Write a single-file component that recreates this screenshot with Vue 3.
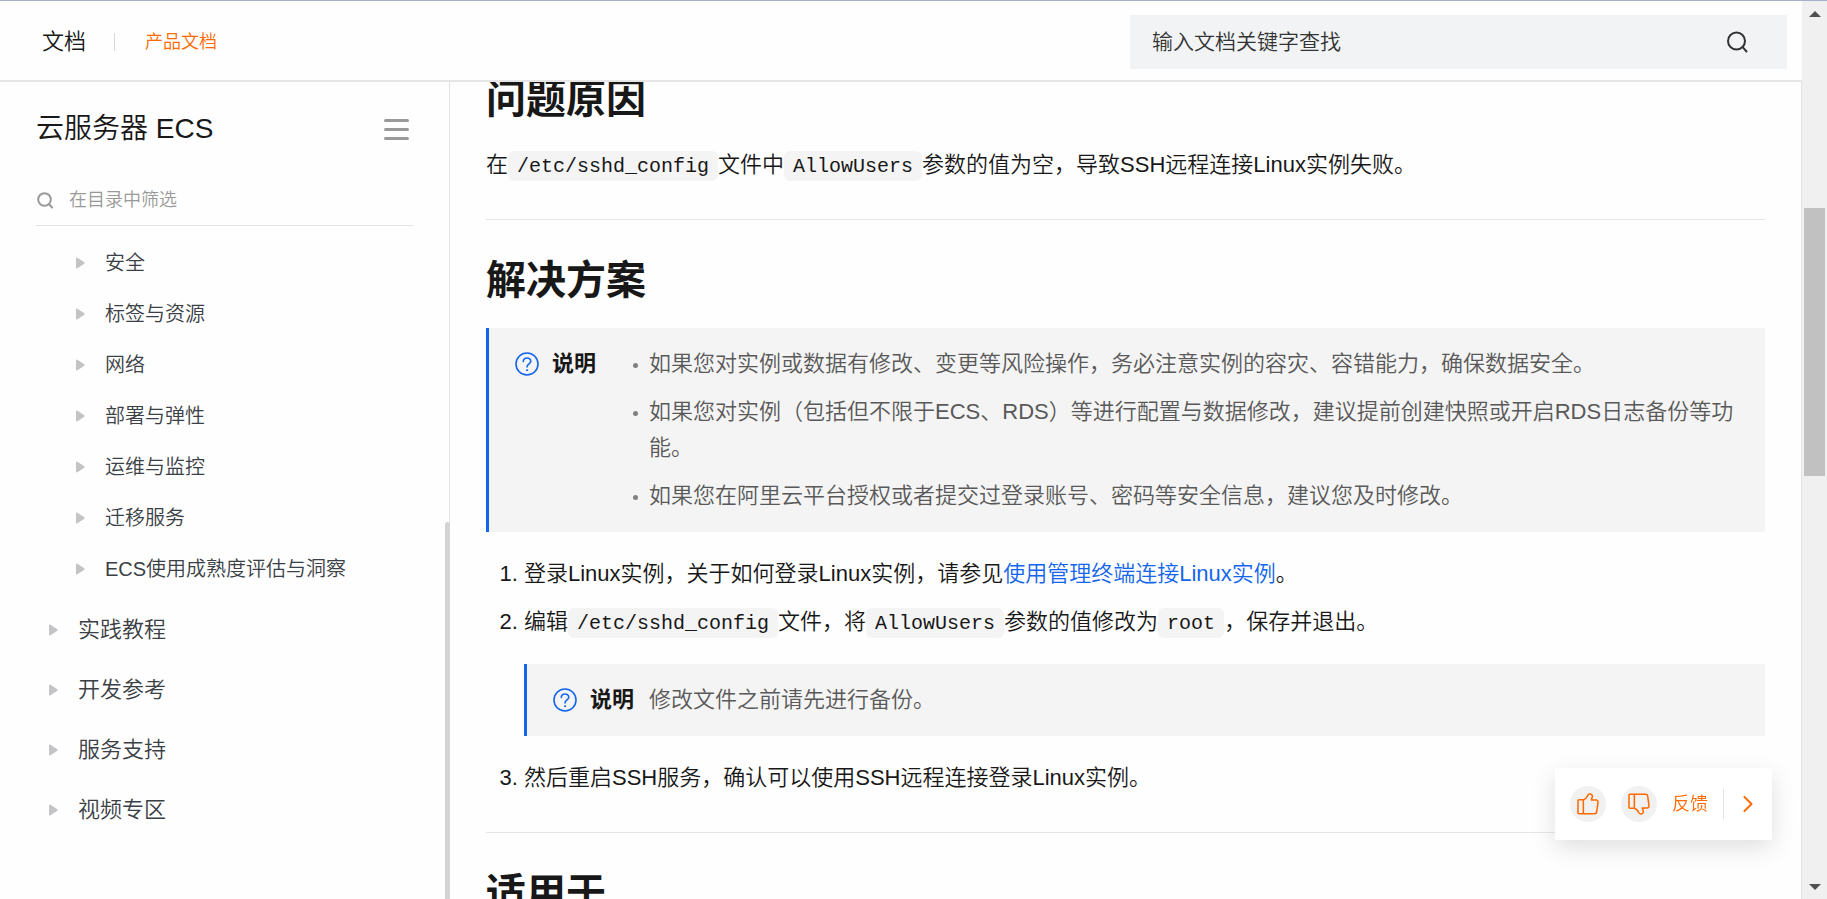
<script setup>
import { ref } from 'vue'

const keyword = ref('')
const filter = ref('')
const subItems = ['安全', '标签与资源', '网络', '部署与弹性', '运维与监控', '迁移服务', 'ECS使用成熟度评估与洞察']
const topItems = ['实践教程', '开发参考', '服务支持', '视频专区']
</script>

<template>
  <div class="page">
    <div class="site">
      <header class="header">
        <a class="brand" href="#">文档</a>
        <span class="split"></span>
        <a class="section" href="#">产品文档</a>
        <form class="search" role="search" @submit.prevent>
          <input v-model="keyword" type="text" aria-label="输入文档关键字查找" placeholder="输入文档关键字查找" />
          <button type="submit" aria-label="搜索">
            <svg width="22" height="22" viewBox="0 0 22 22" fill="none" stroke="#333" stroke-width="2" stroke-linecap="round">
              <circle cx="10.5" cy="10" r="8.5" />
              <path d="M16.7 16.2L20.5 20.5" />
            </svg>
          </button>
        </form>
      </header>

      <div class="body">
        <nav class="sidebar" aria-label="目录">
          <div class="side-head">
            <h1>云服务器 ECS</h1>
            <button class="menu" type="button" aria-label="收起目录"><i></i><i></i><i></i></button>
          </div>
          <label class="filter">
            <svg width="16" height="17" viewBox="0 0 16 17" fill="none" stroke="#999" stroke-width="2" stroke-linecap="round">
              <circle cx="7.5" cy="7.5" r="6.3" />
              <path d="M12 12.2L15 15.5" />
            </svg>
            <input v-model="filter" type="text" aria-label="在目录中筛选" placeholder="在目录中筛选" />
          </label>
          <ul class="tree">
            <li v-for="item in subItems" :key="item" class="sub">
              <a href="#">
                <svg width="9" height="12" viewBox="0 0 9 12"><path d="M0 1.5Q0 0 1.5 .7L8.3 5.2Q9 6 8.3 6.8L1.5 11.3Q0 12 0 10.5Z" fill="#c4c4c6" /></svg>
                {{ item }}
              </a>
            </li>
          </ul>
          <ul class="tree">
            <li v-for="item in topItems" :key="item" class="top">
              <a href="#">
                <svg width="9" height="12" viewBox="0 0 9 12"><path d="M0 1.5Q0 0 1.5 .7L8.3 5.2Q9 6 8.3 6.8L1.5 11.3Q0 12 0 10.5Z" fill="#c4c4c6" /></svg>
                {{ item }}
              </a>
            </li>
          </ul>
          <span class="side-thumb"></span>
        </nav>

        <main class="main">
          <article class="article">
            <section>
              <h2>问题原因</h2>
              <p>在<code>/etc/sshd_config</code>文件中<code>AllowUsers</code>参数的值为空，导致SSH远程连接Linux实例失败。</p>
            </section>
            <section>
              <h2>解决方案</h2>
              <div class="note">
                <svg class="help" width="24" height="24" viewBox="0 0 24 24" fill="none" stroke="#1366ec" stroke-width="1.6" stroke-linecap="round">
                  <circle cx="12" cy="12" r="11" />
                  <path d="M8.3 9.6C8.3 4.8 15.8 4.8 15.8 9.3C15.8 11.8 12 11.9 12 15" />
                  <circle cx="12" cy="18.2" r=".6" fill="#1366ec" stroke-width="1" />
                </svg>
                <strong>说明</strong>
                <ul>
                  <li>如果您对实例或数据有修改、变更等风险操作，务必注意实例的容灾、容错能力，确保数据安全。</li>
                  <li>如果您对实例（包括但不限于ECS、RDS）等进行配置与数据修改，建议提前创建快照或开启RDS日志备份等功能。</li>
                  <li>如果您在阿里云平台授权或者提交过登录账号、密码等安全信息，建议您及时修改。</li>
                </ul>
              </div>
              <ol>
                <li>登录Linux实例，关于如何登录Linux实例，请参见<a href="#">使用管理终端连接Linux实例</a>。</li>
                <li>
                  编辑<code>/etc/sshd_config</code>文件，将<code>AllowUsers</code>参数的值修改为<code>root</code>，保存并退出。
                  <div class="note">
                    <svg class="help" width="24" height="24" viewBox="0 0 24 24" fill="none" stroke="#1366ec" stroke-width="1.6" stroke-linecap="round">
                      <circle cx="12" cy="12" r="11" />
                      <path d="M8.3 9.6C8.3 4.8 15.8 4.8 15.8 9.3C15.8 11.8 12 11.9 12 15" />
                      <circle cx="12" cy="18.2" r=".6" fill="#1366ec" stroke-width="1" />
                    </svg>
                    <strong>说明</strong>
                    <p>修改文件之前请先进行备份。</p>
                  </div>
                </li>
                <li>然后重启SSH服务，确认可以使用SSH远程连接登录Linux实例。</li>
              </ol>
            </section>
            <section>
              <h2>适用于</h2>
            </section>
          </article>
        </main>
      </div>
    </div>

    <div class="scrollbar" aria-hidden="true">
      <svg width="12" height="6" viewBox="0 0 12 6"><path d="M6 0L12 6H0Z" fill="#505050" /></svg>
      <div class="track"><span class="thumb"></span></div>
      <svg width="12" height="6" viewBox="0 0 12 6"><path d="M0 0H12L6 6Z" fill="#505050" /></svg>
    </div>

    <div class="feedback">
      <button class="round" type="button" aria-label="有帮助">
        <svg width="22" height="22" viewBox="0 0 66 66" fill="none" stroke="#ff6a00" stroke-width="4.6" stroke-linejoin="round">
          <path d="M19 20C27 18 30 13 33 6Q35 2 40 3Q47 5 46 11L43 21H58Q64 22 63 28L59 57Q58 62 53 62H6Q3 62 3 59V23Q3 20 6 20ZM19 20V62" />
        </svg>
      </button>
      <button class="round" type="button" aria-label="没帮助">
        <svg width="22" height="22" viewBox="0 0 66 66" fill="none" stroke="#ff6a00" stroke-width="4.6" stroke-linejoin="round">
          <path d="M19 46C27 48 30 53 33 60Q35 64 40 63Q47 61 46 55L43 45H58Q64 44 63 38L59 9Q58 4 53 4H6Q3 4 3 7V43Q3 46 6 46ZM19 46V4" />
        </svg>
      </button>
      <a href="#">反馈</a>
      <span class="bar"></span>
      <button class="next" type="button" aria-label="收起">
        <svg width="10" height="16" viewBox="0 0 10 16" fill="none" stroke="#ff6a00" stroke-width="2" stroke-linecap="round" stroke-linejoin="round">
          <path d="M1.5 1L8.5 8L1.5 15" />
        </svg>
      </button>
    </div>
  </div>
</template>

<style>
body {
  margin: 0;
  overflow: hidden;
}
</style>

<style scoped>
.page {
  display: flex;
  box-sizing: border-box;
  height: 100vh;
  border-top: 1px solid #a5b0cc;
  background: #fefefe;
  color: #181818;
  font-family: "Liberation Sans", "Noto Sans CJK SC", sans-serif;
  font-size: 22px;
  font-weight: 350;
  line-height: 36px;
  overflow: hidden;
}
a {
  color: inherit;
  text-decoration: none;
}
button {
  padding: 0;
  border: 0;
  background: none;
  cursor: pointer;
}
input {
  flex: 1;
  min-width: 0;
  padding: 0;
  border: 0;
  outline: 0;
  background: none;
  color: #333;
  font: inherit;
}
input::placeholder {
  color: inherit;
  opacity: 1;
}
ul,
ol {
  margin: 0;
  padding: 0;
}
svg {
  display: block;
  flex: none;
}
.site {
  flex: 1;
  min-width: 0;
  display: flex;
  flex-direction: column;
}
.header {
  flex: none;
  display: flex;
  align-items: center;
  height: 77px;
  padding: 2px 15px 0 42px;
  border-bottom: 2px solid #e6e6e6;
}
.split {
  width: 1px;
  height: 18px;
  margin: 0 30px 0 28px;
  background: #d8d8d8;
}
.section {
  color: #ff6a00;
  font-size: 18px;
}
.search {
  flex: 0 1 657px;
  display: flex;
  align-items: center;
  box-sizing: border-box;
  height: 54px;
  margin-left: auto;
  padding: 0 39px 0 22px;
  background: #f2f3f5;
  font-size: 21px;
}
.body {
  flex: 1;
  min-height: 0;
  display: flex;
  border-right: 1px solid #e3e3e3;
}
.sidebar {
  position: relative;
  flex: none;
  box-sizing: border-box;
  width: 450px;
  padding: 0 36px;
  border-right: 1px solid #e3e3e3;
  color: #3a4045;
}
.side-head {
  display: flex;
  align-items: center;
  justify-content: space-between;
  margin-top: 27px;
}
h1 {
  margin: 0;
  color: #181818;
  font-size: 28px;
  font-weight: 350;
  line-height: 40px;
}
.menu {
  display: grid;
  gap: 6px;
  width: 25px;
  margin-right: 4px;
}
.menu i {
  height: 3px;
  border-radius: 2px;
  background: #999;
}
.filter {
  display: flex;
  align-items: center;
  gap: 16px;
  height: 50px;
  margin-top: 26px;
  padding-left: 1px;
  border-bottom: 1px solid #e3e3e3;
  margin-bottom: 11px;
  font-size: 18px;
}
.filter input {
  color: #999;
}
.tree {
  list-style: none;
}
.tree a {
  display: flex;
  align-items: center;
  gap: 20px;
}
.sub a {
  height: 51px;
  padding-left: 40px;
  font-size: 20px;
}
.tree + .tree {
  margin-top: 6px;
}
.top a {
  height: 60px;
  padding-left: 13px;
}
.side-thumb {
  position: absolute;
  top: 440px;
  right: -1px;
  bottom: 0;
  width: 5px;
  border-radius: 3px 3px 0 0;
  background: #d4d4d4;
}
.main {
  flex: 1;
  min-width: 0;
  overflow: hidden;
}
/* The article is shown part-way through its scroll range. */
.article {
  margin: -7px 36px 0;
}
section + section {
  margin-top: 36px;
  padding-top: 36px;
  border-top: 1px solid #e6e6e6;
}
h2 {
  margin: 0 0 24px;
  font-size: 40px;
  font-weight: 700;
  line-height: 48px;
}
p {
  margin: 0;
}
code {
  padding: 4px 9px 3px;
  border-radius: 6px;
  background: #f4f4f4;
  font-family: "Liberation Mono", monospace;
  font-size: 20px;
  font-weight: 400;
  line-height: 1;
}
.note {
  display: flex;
  padding: 18px 26px;
  border-left: 3px solid #1366ec;
  background: #f4f4f4;
  color: #595959;
}
.help {
  margin: 6px 13px 6px 0;
}
strong {
  flex: none;
  margin-right: 15px;
  color: #181818;
  font-weight: 700;
}
.note ul {
  padding-left: 38px;
  list-style: none;
}
.note ul li {
  position: relative;
}
.note ul li::before {
  content: "";
  position: absolute;
  top: 17px;
  left: -16px;
  width: 5px;
  height: 5px;
  border-radius: 50%;
  background: #808080;
}
li + li {
  margin-top: 12px;
}
.tree li + li {
  margin-top: 0;
}
ol {
  margin-top: 24px;
  padding-left: 38px;
}
ol a {
  color: #1366ec;
}
ol .note {
  margin: 24px 0;
}
ol li:last-child {
  margin-top: 24px;
}
.scrollbar {
  flex: none;
  display: flex;
  flex-direction: column;
  align-items: center;
  box-sizing: border-box;
  width: 25px;
  padding: 10px 0 9px;
  background: #f0f0f0;
}
.track {
  flex: 1;
  width: 21px;
}
.thumb {
  display: block;
  height: 268px;
  margin-top: 191px;
  background: #c1c1c1;
}
.feedback {
  position: fixed;
  right: 55px;
  bottom: 59px;
  display: flex;
  align-items: center;
  padding: 18px 19px 18px 15px;
  background: #fff;
  box-shadow: 0 8px 24px rgba(0, 0, 0, 0.12);
  color: #ff6a00;
  font-size: 18px;
}
.round {
  display: grid;
  place-items: center;
  width: 36px;
  height: 36px;
  margin-right: 15px;
  border-radius: 50%;
  background: #f1f1f1;
}
.bar {
  width: 1px;
  height: 30px;
  margin: 0 19px 0 15px;
  background: #e3e3e3;
}
</style>
